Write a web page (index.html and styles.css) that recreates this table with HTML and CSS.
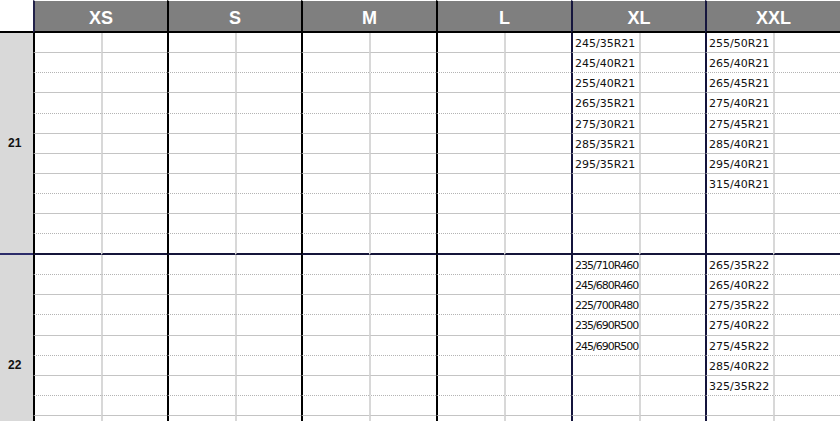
FILE: index.html
```html
<!DOCTYPE html>
<html lang="ja">
<head>
  <meta charset="UTF-8">
  <meta name="viewport" content="width=device-width, initial-scale=1.0">
  <title>Tire Size Chart</title>
  <link rel="stylesheet" href="styles.css">
</head>
<body>
  <div class="sheet">
    <div class="corner"></div>
    <div class="head">XS</div>
    <div class="head">S</div>
    <div class="head">M</div>
    <div class="head">L</div>
    <div class="head">XL</div>
    <div class="head">XXL</div>

    <!-- 21 inch -->
    <div class="group">
      <div class="rh">21</div>
      <div class="row s"><span></span><span></span><span></span><span></span><span></span><span></span><span></span><span></span><span>245/35R21</span><span></span><span>255/50R21</span><span></span></div>
      <div class="row d"><span></span><span></span><span></span><span></span><span></span><span></span><span></span><span></span><span>245/40R21</span><span></span><span>265/40R21</span><span></span></div>
      <div class="row s"><span></span><span></span><span></span><span></span><span></span><span></span><span></span><span></span><span>255/40R21</span><span></span><span>265/45R21</span><span></span></div>
      <div class="row d"><span></span><span></span><span></span><span></span><span></span><span></span><span></span><span></span><span>265/35R21</span><span></span><span>275/40R21</span><span></span></div>
      <div class="row s"><span></span><span></span><span></span><span></span><span></span><span></span><span></span><span></span><span>275/30R21</span><span></span><span>275/45R21</span><span></span></div>
      <div class="row s"><span></span><span></span><span></span><span></span><span></span><span></span><span></span><span></span><span>285/35R21</span><span></span><span>285/40R21</span><span></span></div>
      <div class="row s"><span></span><span></span><span></span><span></span><span></span><span></span><span></span><span></span><span>295/35R21</span><span></span><span>295/40R21</span><span></span></div>
      <div class="row d"><span></span><span></span><span></span><span></span><span></span><span></span><span></span><span></span><span></span><span></span><span>315/40R21</span><span></span></div>
      <div class="row s"><span></span><span></span><span></span><span></span><span></span><span></span><span></span><span></span><span></span><span></span><span></span><span></span></div>
      <div class="row d"><span></span><span></span><span></span><span></span><span></span><span></span><span></span><span></span><span></span><span></span><span></span><span></span></div>
      <div class="row end"><span></span><span></span><span></span><span></span><span></span><span></span><span></span><span></span><span></span><span></span><span></span><span></span></div>
    </div>

    <!-- 22 inch -->
    <div class="group">
      <div class="rh">22</div>
      <div class="row d"><span></span><span></span><span></span><span></span><span></span><span></span><span></span><span></span><span class="tight">235/710R460</span><span></span><span>265/35R22</span><span></span></div>
      <div class="row s"><span></span><span></span><span></span><span></span><span></span><span></span><span></span><span></span><span class="tight">245/680R460</span><span></span><span>265/40R22</span><span></span></div>
      <div class="row d"><span></span><span></span><span></span><span></span><span></span><span></span><span></span><span></span><span class="tight">225/700R480</span><span></span><span>275/35R22</span><span></span></div>
      <div class="row s"><span></span><span></span><span></span><span></span><span></span><span></span><span></span><span></span><span class="tight">235/690R500</span><span></span><span>275/40R22</span><span></span></div>
      <div class="row d"><span></span><span></span><span></span><span></span><span></span><span></span><span></span><span></span><span class="tight">245/690R500</span><span></span><span>275/45R22</span><span></span></div>
      <div class="row s"><span></span><span></span><span></span><span></span><span></span><span></span><span></span><span></span><span></span><span></span><span>285/40R22</span><span></span></div>
      <div class="row d"><span></span><span></span><span></span><span></span><span></span><span></span><span></span><span></span><span></span><span></span><span>325/35R22</span><span></span></div>
      <div class="row s"><span></span><span></span><span></span><span></span><span></span><span></span><span></span><span></span><span></span><span></span><span></span><span></span></div>
      <div class="row d"><span></span><span></span><span></span><span></span><span></span><span></span><span></span><span></span><span></span><span></span><span></span><span></span></div>
      <div class="row s"><span></span><span></span><span></span><span></span><span></span><span></span><span></span><span></span><span></span><span></span><span></span><span></span></div>
      <div class="row end"><span></span><span></span><span></span><span></span><span></span><span></span><span></span><span></span><span></span><span></span><span></span><span></span></div>
    </div>
  </div>
</body>
</html>
```

FILE: styles.css
```css
body {
  margin: 0;
  background: #fff;
  overflow: hidden;
  font-family: "DejaVu Sans", Verdana, sans-serif;
}

.sheet {
  display: grid;
  grid-template-columns: 33px 68px 66px 68px 66px 68px 67px 68px 67px 68px 66px 68px 67px;
  grid-template-rows:
    33px
    20px 20px 20px 21px 20px 20px 20px 20px 20px 20px 21px
    20px 20px 20px 21px 20px 20px 20px 20px 20px 20px 21px;
  width: 840px;
}

/* header row */
.corner {
  box-sizing: border-box;
  border-bottom: 2px solid #000;
  background: #fff;
}

.head {
  grid-column: span 2;
  box-sizing: border-box;
  border-top: 1px solid #fff;
  border-bottom: 2px solid #000;
  border-left: 2px solid #000;
  background: #7f7f7f;
  color: #fff;
  font-family: "Liberation Sans", Arial, sans-serif;
  font-weight: bold;
  font-size: 18px;
  line-height: 25px;
  padding-top: 5px;
  text-align: center;
}

.head:nth-child(2) {
  border-left-color: #22224a;
}

.head:nth-child(6),
.head:nth-child(7) {
  border-left-color: #16163e;
}

/* body rows */
.group,
.row {
  display: contents;
}

.rh {
  grid-column: 1;
  grid-row: span 11;
  background: #d9d9d9;
  border-bottom: 2px solid #2c2c6a;
  font-family: "Liberation Sans", Arial, sans-serif;
  font-weight: bold;
  font-size: 12px;
  color: #111;
  display: flex;
  align-items: center;
  padding-left: 8px;
}

.row span {
  box-sizing: border-box;
  border-bottom: 1px solid #c4c4c4;
  border-left: 2px solid #d8d8d8;
  font-size: 11px;
  line-height: 19px;
  padding: 1px 0 0 2px;
  color: #111;
  white-space: nowrap;
  overflow: hidden;
}

.row span:nth-child(odd) {
  border-left-color: #000;
}

.row span:nth-child(9),
.row span:nth-child(11) {
  border-left-color: #14143c;
}

.row.d span {
  border-bottom: 1px dotted #b4b4b4;
}

.row.end span {
  border-bottom: 2px solid #15153a;
}

.tight {
  letter-spacing: -1px;
}
```
